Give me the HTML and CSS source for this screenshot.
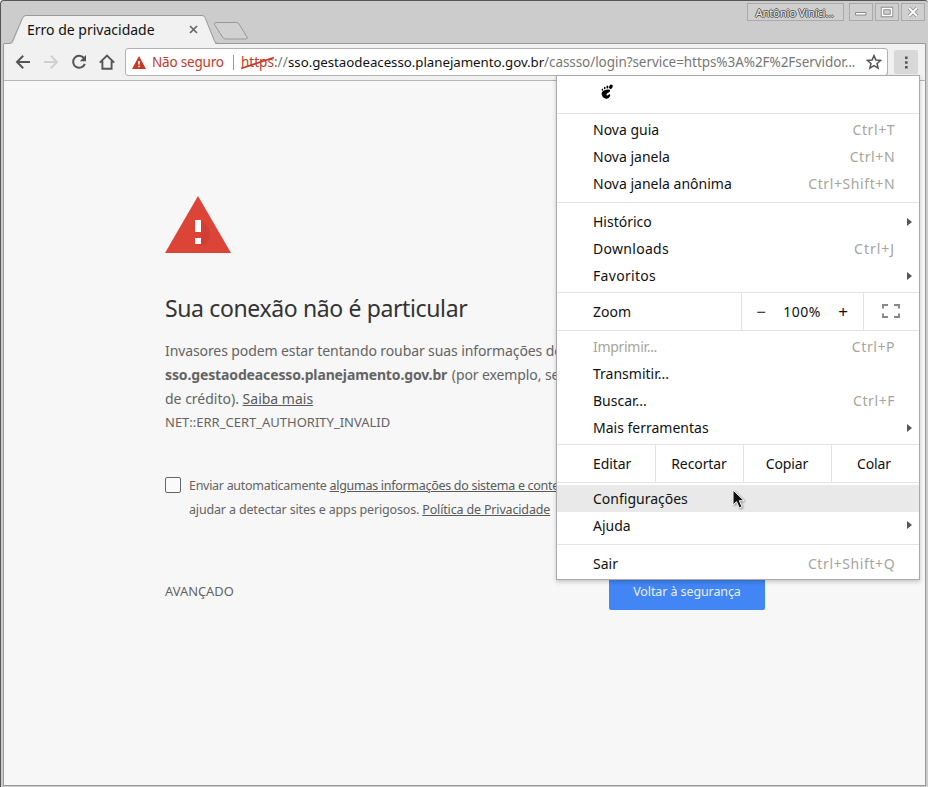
FILE: index.html
```html
<!DOCTYPE html>
<html lang="pt-BR">
<head>
<meta charset="utf-8">
<title>Erro de privacidade</title>
<link rel="stylesheet" href="styles.css">
</head>
<body>
<div class="window">
  <header class="tabstrip">
    <svg class="tab-shapes" width="260" height="30" viewBox="0 0 260 30">
      <path d="M3 29.500L10 28 20 3Q21 .5 23 .5H199Q201 .5 202 2.500L212 28 213 30H3Z" fill="#f1f1f1"/>
      <path d="M1 28.500H6Q8.500 28.500 9.500 26L19.500 3Q20.500 .5 23 .5H199Q201 .5 202 2.500L211.500 26Q212.500 28.500 215 28.500" fill="none" stroke="#999"/>
      <path d="M213 7.500H233Q235 7.500 236 9L244 22Q245 24 243 24H222.500Q220.500 24 219.500 22L211.500 9.500Q211 7.500 213 7.500Z" fill="#d1d1d1" stroke="#999"/>
    </svg>
    <div class="tab"><span class="tab-title">Erro de privacidade</span>
      <svg class="tab-close" width="9" height="9" viewBox="0 0 9 9"><path d="M1 1L8 8M8 1L1 8" stroke="#666" stroke-width="1.700"/></svg>
    </div>
    <div class="controls">
      <span class="user">Antônio Viníci...</span>
      <span class="ctl"><svg width="24" height="18" viewBox="0 0 24 18"><path d="M6.500 9.500H17V12H6.500Z" fill="#fff" stroke="#888"/></svg></span>
      <span class="ctl"><svg width="24" height="18" viewBox="0 0 24 18"><path d="M7.500 5.500H16.500V12.500H7.500Z" fill="none" stroke="#888" stroke-width="3.400"/><path d="M7.500 5.500H16.500V12.500H7.500Z" fill="none" stroke="#fff" stroke-width="1.600"/></svg></span>
      <span class="ctl"><svg width="24" height="18" viewBox="0 0 24 18"><path d="M8 5L16 13M16 5L8 13" stroke="#888" stroke-width="3.600"/><path d="M8 5L16 13M16 5L8 13" stroke="#fff" stroke-width="1.900"/></svg></span>
    </div>
  </header>
  <nav class="toolbar">
    <svg class="nav-icon" width="16" height="16" viewBox="0 0 16 16"><path d="M15 8H2M8.200 1.800L2 8L8.200 14.200" fill="none" stroke="#555" stroke-width="2"/></svg>
    <svg class="nav-icon" width="16" height="16" viewBox="0 0 16 16"><path d="M1 8H14M7.800 1.800L14 8L7.800 14.200" fill="none" stroke="#d0d0d0" stroke-width="2"/></svg>
    <svg class="nav-icon" width="16" height="16" viewBox="0 0 16 16"><path d="M12.800 4A6 6 0 1 0 13.800 9.800" fill="none" stroke="#555" stroke-width="2"/><path d="M15 1V7.200H8.800Z" fill="#555"/></svg>
    <svg class="nav-icon" width="16" height="16" viewBox="0 0 16 16"><path d="M.8 8.700L8 1.500L15.200 8.700M3.400 7V14.700H12.600V7" fill="none" stroke="#555" stroke-width="1.900"/></svg>
    <div class="omnibox">
      <svg class="warn" width="14" height="13" viewBox="0 0 14 13"><path d="M7 0L14 13H0Z" fill="#c53929"/><path d="M6.200 5H7.800V8.500H6.200ZM6.200 9.700H7.800V11.200H6.200Z" fill="#fff"/></svg>
      <span class="unsafe">Não seguro</span>
      <span class="divider"></span>
      <span class="scheme">https<svg class="strike" width="35" height="14" viewBox="0 0 35 14"><path d="M1 12.500L34 1.500" stroke="#c53929" stroke-width="1.800"/></svg></span><span class="slashes">://</span><span class="host">sso.gestaodeacesso.planejamento.gov.br</span><span class="path">/cassso/login?service=https%3A%2F%2Fservidor...</span>
      <svg class="star" width="16" height="16" viewBox="0 0 16 16"><path d="M8 1.600L9.900 6L14.600 6.400L11 9.500L12.100 14.100L8 11.700L3.900 14.100L5 9.500L1.400 6.400L6.100 6Z" fill="none" stroke="#555" stroke-width="1.500"/></svg>
    </div>
    <div class="more"><svg width="24" height="24" viewBox="0 0 24 24"><path d="M11 6.500h2.600v2.600H11zM11 11.200h2.600v2.600H11zM11 15.900h2.600v2.600H11z" fill="#555"/></svg></div>
  </nav>
  <main class="page">
    <div class="interstitial">
      <svg class="alert" width="66" height="57" viewBox="0 0 66 57">
        <path d="M33 0L66 57H0Z" fill="#db4437"/>
        <path d="M36 24L44 32Q46 44 41 48L36 50 30 48 36 47 36 36Z" fill="#c53e30" opacity=".6"/>
        <path d="M30 24h6v12h-6zM30 42h6v6h-6z" fill="#fff"/>
      </svg>
      <h1>Sua conexão não é particular</h1>
      <p class="body"><span class="l1">Invasores podem estar tentando roubar suas informações de</span><br><b>sso.gestaodeacesso.planejamento.gov.br</b> <span class="l2">(por exemplo, senhas</span><br><span class="l3">de crédito). <a>Saiba mais</a></span></p>
      <p class="code">NET::ERR_CERT_AUTHORITY_INVALID</p>
      <div class="optin">
        <span class="checkbox"></span>
        <p><span class="o1">Enviar automaticamente <a>algumas informações do sistema e conteúdo</a></span><br><span class="o2">ajudar a detectar sites e apps perigosos. <a>Política de Privacidade</a></span></p>
      </div>
      <div class="actions"><span class="advanced">AVANÇADO</span><span class="button">Voltar à segurança</span></div>
    </div>
  </main>
  <div class="menu">
    <div class="menu-head">
      <svg width="14" height="16" viewBox="0 0 14 16"><path d="M8 5.500C10 5.100 10.500 6 10 7.300 9.500 8.700 7 8.800 6.500 10.200 6.200 11.500 8 12 8.500 10.800 9 9.700 10.500 10 10.200 11.500 9.700 14 7.500 15.200 5.300 14.500 2.500 13.600 1 10.500 2 8.300 3 6.300 5.500 5.800 8 5.500Z"/><ellipse cx="10.900" cy="2.700" rx="1.700" ry="2.200" transform="rotate(25 10.900 2.700)"/><ellipse cx="7.400" cy="2.900" rx="1" ry="1.500"/><ellipse cx="4.700" cy="4" rx=".8" ry="1.300"/><ellipse cx="2.400" cy="5.700" rx=".7" ry="1.100" transform="rotate(-20 2.400 5.700)"/></svg>
    </div>
    <div class="group g1">
      <div class="item"><span>Nova guia</span><kbd>Ctrl+T</kbd></div>
      <div class="item"><span>Nova janela</span><kbd>Ctrl+N</kbd></div>
      <div class="item"><span>Nova janela anônima</span><kbd>Ctrl+Shift+N</kbd></div>
    </div>
    <div class="group g2">
      <div class="item sub"><span>Histórico</span></div>
      <div class="item"><span class="wide">Downloads</span><kbd class="wider">Ctrl+J</kbd></div>
      <div class="item sub"><span class="wide">Favoritos</span></div>
    </div>
    <div class="zoom-row">
      <span class="label">Zoom</span>
      <span class="zoom-ctl"><span class="sign">−</span><span class="pct">100%</span><span class="sign">+</span></span>
      <span class="full"><svg width="18" height="14" viewBox="0 0 18 14"><path d="M1 4.500V1H6M12 1H17V4.500M17 9.500V13H12M6 13H1V9.500" fill="none" stroke="#888" stroke-width="2"/></svg></span>
    </div>
    <div class="group g3">
      <div class="item disabled"><span>Imprimir...</span><kbd>Ctrl+P</kbd></div>
      <div class="item"><span>Transmitir...</span></div>
      <div class="item"><span>Buscar...</span><kbd>Ctrl+F</kbd></div>
      <div class="item sub"><span>Mais ferramentas</span></div>
    </div>
    <div class="edit-row"><span class="label">Editar</span><span>Recortar</span><span>Copiar</span><span class="last">Colar</span></div>
    <div class="group g4">
      <div class="item active"><span>Configurações</span></div>
      <div class="item sub"><span>Ajuda</span></div>
    </div>
    <div class="group g5">
      <div class="item"><span>Sair</span><kbd>Ctrl+Shift+Q</kbd></div>
    </div>
  </div>
  <svg class="cursor" width="14" height="21" viewBox="0 0 14 21"><path d="M1 1V16L4.500 12.700 7.300 19 10 17.800 7.300 11.700H12Z" fill="#111" stroke="#fff" stroke-width="1"/></svg>
</div>
</body>
</html>
```

FILE: styles.css
```css
* { box-sizing: border-box; }
body { margin: 0; font-family: "Noto Sans", "Open Sans", sans-serif; font-size: 14px; }
p, h1 { margin: 0; }
svg { display: block; flex: none; }
a { text-decoration: underline; }

.window {
  position: relative;
  width: 928px;
  height: 787px;
  overflow: hidden;
  background: #ccc;
  border-top: 1px solid #555;
  border-left: 1px solid #555;
  border-radius: 4px 3px 0 0;
  padding: 0 2px 1px 2px;
  white-space: nowrap;
}

.tabstrip { position: relative; height: 42px; display: flex; justify-content: space-between; margin-right: -2px; }
.tab-shapes { position: absolute; left: 0; top: 14px; z-index: 1; }
.tab { position: relative; z-index: 2; display: flex; align-items: center; width: 196px; padding: 15px 0 0 24px; justify-content: space-between; }
.tab-title { color: #111; }
.tab-close { margin-right: 1px; }
.controls { display: flex; gap: 2px; padding: 2px 3px 0 0; height: 20px; }
.user, .ctl { height: 18px; border: 1px solid #aaa; background: #cfcfcf; display: flex; align-items: center; justify-content: center; }
.user { width: 97px; margin-right: 3px; font-size: 11.500px; color: #eee; padding-right: 2px; letter-spacing: -.3px; text-shadow: -1px 0 #555, 1px 0 #555, 0 -1px #555, 0 1px #555; }
.ctl { width: 24px; }

.toolbar {
  height: 38px;
  display: flex;
  align-items: center;
  background: #f1f1f1;
  border: 1px solid #999;
  border-bottom-color: #b5b5b5;
  border-radius: 2px 2px 0 0;
  padding-left: 11px;
}
.nav-icon { margin-right: 12px; }
.omnibox { margin-left: -2px; width: 763px; height: 28px; display: flex; align-items: center; background: #fff; border: 1px solid #b0b0b0; border-radius: 3px; padding-left: 6px; font-size: 13.500px; }
.unsafe { color: #c53929; width: 73px; margin-left: 6px; letter-spacing: -.2px; }
.divider { width: 1px; height: 15px; background: #999; margin: 0 7px 0 8px; }
.scheme { position: relative; color: #c53929; width: 33px; }
.strike { position: absolute; left: -1px; top: 3px; }
.slashes { color: #777; width: 14px; }
.host { color: #111; width: 256px; font-size: 13.300px; letter-spacing: -.04px; }
.path { color: #777; width: 311px; letter-spacing: -.06px; }
.star { margin-left: auto; margin-right: 5px; }
.more { width: 24px; height: 24px; margin-left: 6px; background: #d8d8d8; border-radius: 2px; }

.page { height: 705px; background: #f7f7f7; border: solid #999; border-width: 0 1px 1px; padding: 115px 160px 0 161px; }
.interstitial { width: 600px; color: #646464; }
h1 { margin-top: 36px; font-size: 23px; line-height: 38px; font-weight: 400; color: #333; letter-spacing: -.37px; }
.body { margin-top: 12px; font-size: 14px; line-height: 24px; letter-spacing: -.1px; }
.body b { letter-spacing: -.13px; }
.l2 { margin-left: 1px; }
.l3 { letter-spacing: 0; }
.body a, .optin a { color: #5a5a5a; }
.code { margin-top: -1px; font-size: 13px; line-height: 24px; }
.optin { display: flex; margin-top: 40px; font-size: 12.500px; line-height: 24px; }
.o1 { letter-spacing: -.29px; }
.o2 { letter-spacing: -.16px; }
.checkbox { flex: none; width: 16px; height: 16px; margin: 3px 8px 0 0; border: 1px solid #666; border-radius: 2px; background: #fafafa; }
.actions { display: flex; justify-content: space-between; margin-top: 52px; line-height: 36px; font-size: 12.500px; }
.advanced { font-size: 12.900px; line-height: 34px; }
.button { width: 156px; height: 36px; background: #4285f4; color: #e8f0fe; border-radius: 2px; text-align: center; letter-spacing: -.1px; }

.menu {
  position: absolute;
  left: 555px;
  top: 74px;
  width: 364px;
  height: 505px;
  background: #fff;
  border: 1px solid #aaa;
  box-shadow: 0 2px 4px rgba(0, 0, 0, .2);
  color: #111;
  font-size: 14px;
}
.menu-head { height: 37px; padding: 8px 0 0 43px; }
.group { border-top: 1px solid #e3e3e3; }
.g1 { padding: 3px 0 4px; }
.g2 { padding: 6px 0 2px; }
.g3 { padding: 3px 0 2px; }
.g4 { padding: 2px 0 5px; }
.g5 { padding: 5px 0 2px; }
.item { position: relative; height: 27px; line-height: 26px; padding: 0 24px 0 36px; display: flex; justify-content: space-between; }
.g4 .item, .g5 .item { line-height: 28px; }
.item kbd { font: inherit; color: #a5a59d; letter-spacing: .6px; margin-right: -.2px; }
.item .wider { letter-spacing: 1px; }
.wide { letter-spacing: .3px; }
.disabled { color: #a5a59d; }
.disabled span { letter-spacing: -.3px; }
.active { background: #e9e9e9; }
.sub::after { content: ""; position: absolute; right: 7px; top: 9px; border: solid transparent; border-width: 4px 0 4px 5px; border-left-color: #555; }
.zoom-row, .edit-row { height: 38px; border-top: 1px solid #e3e3e3; display: grid; line-height: 37px; }
.zoom-row { grid-template-columns: 184px 122px 1fr; }
.edit-row { grid-template-columns: 98px 88px 88px 1fr; text-align: center; letter-spacing: -.1px; }
.zoom-row .label, .edit-row .label { padding-left: 36px; text-align: left; }
.zoom-row > * + *, .edit-row > * + * { border-left: 1px solid #e3e3e3; padding-right: 1px; }
.edit-row .last { padding-right: 3px; }
.zoom-ctl { display: grid; grid-template-columns: 38px 44px 38px; text-align: center; }
.sign { font-size: 17px; }
.pct { letter-spacing: .5px; }
.full { display: flex; align-items: center; justify-content: center; padding: 0 2px 2px 0; }

.cursor { position: absolute; left: 731px; top: 488px; filter: drop-shadow(1px 1px 1px rgba(0, 0, 0, .4)); }
```
